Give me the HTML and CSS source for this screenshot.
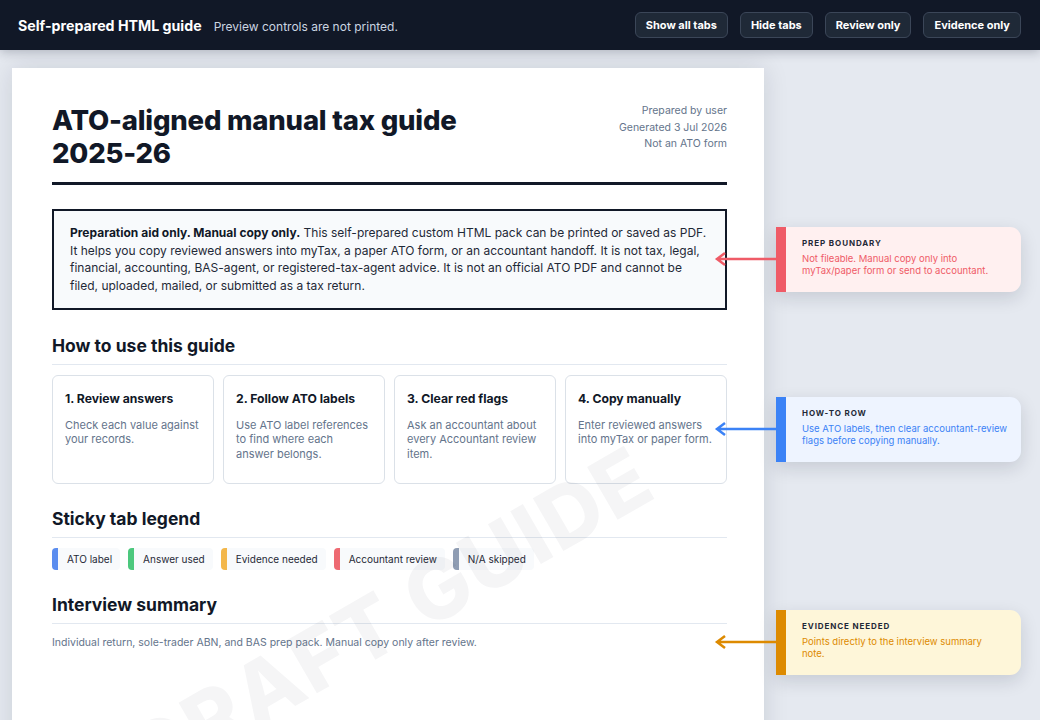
FILE: index.html
```html
<!DOCTYPE html>
<html lang="en">
<head>
  <meta charset="UTF-8">
  <title>ATO-aligned manual tax guide 2025-26</title>
  <link rel="stylesheet" href="styles.css">
</head>
<body>
  <header class="topbar">
    <div class="brand">
      <strong>Self-prepared HTML guide</strong>
      <span>Preview controls are not printed.</span>
    </div>
    <div class="controls">
      <button type="button">Show all tabs</button>
      <button type="button">Hide tabs</button>
      <button type="button">Review only</button>
      <button type="button">Evidence only</button>
    </div>
  </header>

  <main class="stage">
    <article class="sheet">
      <div class="watermark">DRAFT GUIDE</div>

      <div class="doc-head">
        <h1>ATO-aligned manual tax guide 2025-26</h1>
        <div class="meta">
          <div>Prepared by user</div>
          <div>Generated 3 Jul 2026</div>
          <div>Not an ATO form</div>
        </div>
      </div>

      <p class="notice"><b>Preparation aid only. Manual copy only.</b> This self-prepared custom HTML pack can be printed or saved as PDF. It helps you copy reviewed answers into myTax, a paper ATO form, or an accountant handoff. It is not tax, legal, financial, accounting, BAS-agent, or registered-tax-agent advice. It is not an official ATO PDF and cannot be filed, uploaded, mailed, or submitted as a tax return.</p>

      <h2>How to use this guide</h2>
      <div class="steps">
        <div class="step">
          <h3>1. Review answers</h3>
          <p>Check each value against your records.</p>
        </div>
        <div class="step">
          <h3>2. Follow ATO labels</h3>
          <p>Use ATO label references to find where each answer belongs.</p>
        </div>
        <div class="step">
          <h3>3. Clear red flags</h3>
          <p>Ask an accountant about every Accountant review item.</p>
        </div>
        <div class="step">
          <h3>4. Copy manually</h3>
          <p>Enter reviewed answers into myTax or paper form.</p>
        </div>
      </div>

      <h2 class="tight">Sticky tab legend</h2>
      <div class="legend">
        <span class="tab tab-ato">ATO label</span>
        <span class="tab tab-answer">Answer used</span>
        <span class="tab tab-evidence">Evidence needed</span>
        <span class="tab tab-review">Accountant review</span>
        <span class="tab tab-na">N/A skipped</span>
      </div>

      <h2 class="tight">Interview summary</h2>
      <p class="summary">Individual return, sole-trader ABN, and BAS prep pack. Manual copy only after review.</p>
    </article>

    <aside class="note note-red note-prep">
      <svg class="pointer" width="62" height="16" viewBox="0 0 62 16"><path d="M62 8H3M11 2L3 8l8 6" fill="none" stroke="currentColor" stroke-width="2.5"/></svg>
      <div class="note-title">PREP BOUNDARY</div>
      <div class="note-text">Not fileable. Manual copy only into myTax/paper form or send to accountant.</div>
    </aside>
    <aside class="note note-blue note-howto">
      <svg class="pointer" width="62" height="16" viewBox="0 0 62 16"><path d="M62 8H3M11 2L3 8l8 6" fill="none" stroke="currentColor" stroke-width="2.5"/></svg>
      <div class="note-title">HOW-TO ROW</div>
      <div class="note-text">Use ATO labels, then clear accountant-review flags before copying manually.</div>
    </aside>
    <aside class="note note-amber note-evidence">
      <svg class="pointer" width="62" height="16" viewBox="0 0 62 16"><path d="M62 8H3M11 2L3 8l8 6" fill="none" stroke="currentColor" stroke-width="2.5"/></svg>
      <div class="note-title">EVIDENCE NEEDED</div>
      <div class="note-text">Points directly to the interview summary<br>note.</div>
    </aside>
  </main>
</body>
</html>
```

FILE: styles.css
```css
* { box-sizing: border-box; }
html, body { height: 720px; overflow: hidden; }
body { margin: 0; background: #e5e9f0; color: #1f2937; font-family: Inter, "Noto Sans", sans-serif; }

.topbar { height: 50px; background: #111827; display: flex; align-items: center; justify-content: space-between; padding: 0 19px 0 18px; box-shadow: 0 2px 10px rgba(15, 23, 42, 0.25); position: relative; z-index: 2; }
.brand { display: flex; align-items: baseline; gap: 12px; }
.brand strong { color: #fff; font-size: 14.2px; font-weight: 700; }
.brand span { color: #cbd5e1; font-size: 12px; }
.controls { display: flex; gap: 12px; }
.controls button { height: 26px; padding: 0 10px; background: #1f2937; color: #fff; border: 1px solid #3b4658; border-radius: 6px; font-family: inherit; font-size: 11px; font-weight: 700; }

.stage { position: relative; padding: 18px 12px 0; }
.sheet { position: relative; width: 752px; min-height: 760px; background: #fff; padding: 36px 37px 40px 40px; box-shadow: 0 0 24px rgba(15, 23, 42, 0.12); overflow: hidden; }

.watermark { position: absolute; left: 378px; top: 548px; transform: translate(-50%, -50%) rotate(-30deg); font-size: 84px; font-weight: 800; letter-spacing: 2px; color: rgba(15, 23, 42, 0.045); white-space: nowrap; pointer-events: none; }

.doc-head { display: flex; justify-content: space-between; align-items: flex-start; padding-bottom: 12px; border-bottom: 3px solid #111827; }
h1 { margin: 0; width: 430px; font-size: 27.5px; line-height: 33px; font-weight: 800; color: #111827; letter-spacing: -0.2px; }
.meta { margin-top: -1px; text-align: right; font-size: 10.5px; line-height: 16.5px; color: #64748b; }

.notice { margin: 24px 0 0; padding: 13px 16px; border: 2px solid #111827; background: #f8fafc; font-size: 12px; line-height: 17.7px; color: #1f2937; }
.notice b { font-weight: 700; color: #111827; }

h2 { margin: 25px 0 0; padding-bottom: 7px; border-bottom: 1px solid #e2e8f0; font-size: 17.5px; line-height: 22px; font-weight: 700; color: #111827; }
h2.tight { margin-top: 24px; }

.steps { display: grid; grid-template-columns: repeat(4, 1fr); gap: 9px; margin-top: 10px; }
.step { min-height: 109px; padding: 14px 12px; border: 1px solid #dbe1e8; border-radius: 6px; background: rgba(255, 255, 255, 0.6); }
.step h3 { margin: 0; font-size: 12.2px; line-height: 18px; font-weight: 700; color: #111827; }
.step p { margin: 10px 0 0; font-size: 11px; line-height: 14.5px; color: #64748b; }

.legend { display: flex; gap: 8px; margin-top: 10px; }
.tab { height: 22px; display: flex; align-items: center; padding: 0 8px 0 9px; background: #f8fafc; border-left: 6px solid; border-radius: 4px; font-size: 10px; color: #1f2937; }
.tab-ato { border-left-color: #5b8def; }
.tab-answer { border-left-color: #4cc87d; }
.tab-evidence { border-left-color: #f3b74b; }
.tab-review { border-left-color: #ee6a72; }
.tab-na { border-left-color: #8f9db3; }

.summary { margin: 11px 0 0; font-size: 10.5px; line-height: 15px; color: #64748b; }

.note { position: absolute; left: 776px; width: 245px; height: 65px; padding: 10px 10px 0 16px; border-left: 10px solid; border-radius: 0 11px 11px 0; box-shadow: 0 6px 18px rgba(15, 23, 42, 0.14); }
.note-title { font-size: 8px; font-weight: 700; letter-spacing: 0.9px; color: #1f2937; line-height: 12px; }
.note-text { margin-top: 4px; font-size: 9.5px; line-height: 12px; }
.pointer { position: absolute; left -72px; left: -72px; top: 24px; }
.note-red { background: #fff0f0; border-left-color: #ef5b67; color: #ef5b67; }
.note-blue { background: #eef4ff; border-left-color: #3b82f6; color: #3b82f6; }
.note-amber { background: #fef6d9; border-left-color: #dd8a00; color: #dd8a00; }
.note-prep { top: 177px; }
.note-howto { top: 347px; }
.note-evidence { top: 560px; }
```
